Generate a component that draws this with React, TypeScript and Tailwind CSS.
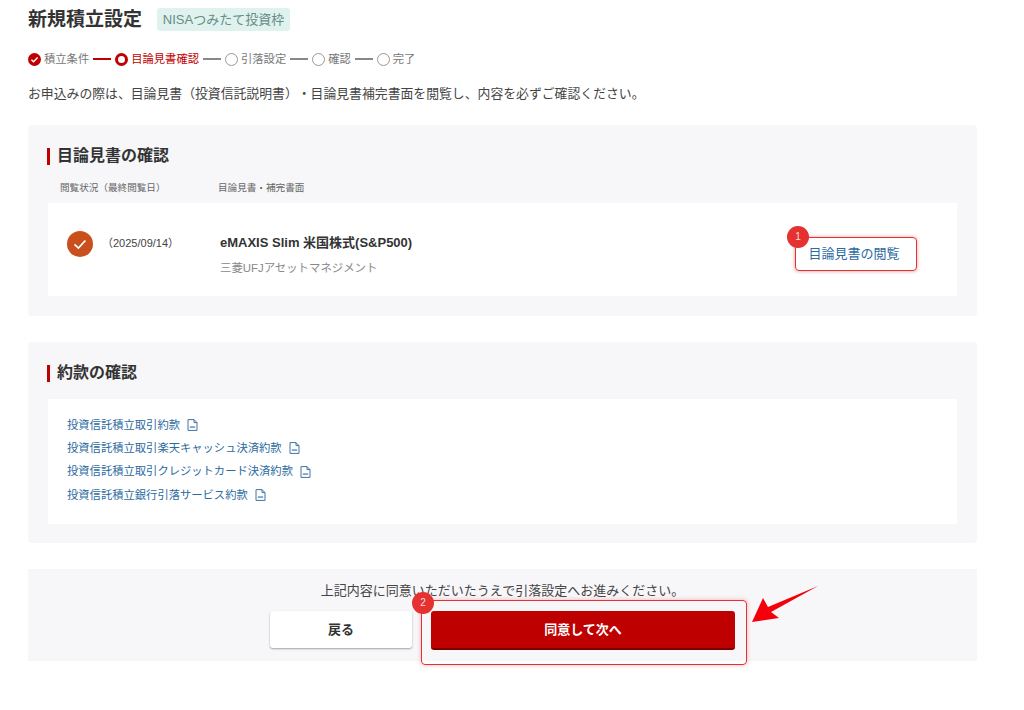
const fontStack = { fontFamily: '"Liberation Sans", "Noto Sans CJK JP", sans-serif' };

const steps = [
  { label: '積立条件', state: 'done' },
  { label: '目論見書確認', state: 'current' },
  { label: '引落設定', state: 'todo' },
  { label: '確認', state: 'todo' },
  { label: '完了', state: 'todo' },
];

const yakkan = [
  '投資信託積立取引約款',
  '投資信託積立取引楽天キャッシュ決済約款',
  '投資信託積立取引クレジットカード決済約款',
  '投資信託積立銀行引落サービス約款',
];

function StepIcon({ state }: { state: string }) {
  if (state === 'done') {
    return (
      <svg width="13" height="13" viewBox="0 0 13 13" className="shrink-0">
        <circle cx="6.5" cy="6.5" r="6.5" fill="#bf0000" />
        <path d="M3.4 6.7l2.2 2.1 4-4.2" fill="none" stroke="#fff" strokeWidth="1.5" />
      </svg>
    );
  }
  if (state === 'current') {
    return <span className="w-[13px] h-[13px] shrink-0 rounded-full border-[3px] border-[#bf0000] bg-white" />;
  }
  return <span className="w-[13px] h-[13px] shrink-0 rounded-full border border-[#999999] bg-white" />;
}

function PdfIcon() {
  return (
    <svg width="11" height="12" viewBox="0 0 11 12" className="shrink-0">
      <path d="M1 .6h6l3 3v7.800H1z" fill="none" stroke="#3f74a3" strokeWidth="1" />
      <path d="M7 .6v3h3" fill="none" stroke="#3f74a3" strokeWidth="1" />
      <path d="M2.800 7.200h5.400v1.800H2.800z" fill="#7fa3c4" />
    </svg>
  );
}

function Heading({ children }: { children: string }) {
  return (
    <h2 className="flex items-center gap-[7px] -ml-px text-[16px] leading-[18px] font-bold text-[#333333]">
      <span className="w-[3px] h-[17px] bg-[#bf0000]" />
      {children}
    </h2>
  );
}

function Badge({ n, className }: { n: number; className: string }) {
  return (
    <span className={`absolute w-[22px] h-[22px] rounded-full bg-[#e5312f] text-[#ffdcdc] text-[10px] leading-[22px] text-center ${className}`}>
      {n}
    </span>
  );
}

export default function App() {
  return (
    <div className="relative w-[1024px] h-[710px] bg-white overflow-hidden text-[#333333] [text-spacing-trim:space-all]" style={fontStack}>
      <div className="w-[949px] ml-[28px] pt-[8px]">
        <div className="flex items-center h-[23px] gap-[15px]">
          <h1 className="text-[19px] leading-[23px] font-bold text-[#333333]">新規積立設定</h1>
          <span className="h-[23px] w-[133px] rounded-[3px] bg-[#dff2ee] text-[13px] leading-[23px] text-center text-[#668c86]">
            NISAつみたて投資枠
          </span>
        </div>

        <ol className="flex items-center mt-[20px] h-[16px] text-[11.3px] text-[#777777]">
          {steps.map((s, i) => (
            <li key={s.label} className="flex items-center">
              {i > 0 && (
                <span className={`w-[18px] h-[2px] mx-[4px] ${i === 1 ? 'bg-[#bf0000]' : 'bg-[#888888]'}`} />
              )}
              <StepIcon state={s.state} />
              <span className={`ml-[3px] ${s.state === 'current' ? 'text-[#bf0000]' : ''}`}>{s.label}</span>
            </li>
          ))}
        </ol>

        <p className="mt-[18px] text-[12.85px] leading-[18px] text-[#444444]">
          お申込みの際は、目論見書（投資信託説明書）・目論見書補完書面を閲覧し、内容を必ずご確認ください。
        </p>

        <section className="mt-[22px] h-[191px] rounded-[4px] bg-[#f7f6f9] px-[20px] pt-[22px]">
          <Heading>目論見書の確認</Heading>
          <div className="flex h-[38px] items-center text-[9.6px] text-[#666666] pl-[12px] pt-[9px]">
            <span className="w-[158px]">閲覧状況（最終閲覧日）</span>
            <span>目論見書・補完書面</span>
          </div>
          <div className="flex items-start h-[93px] bg-white pl-[19px] pr-[41px]">
            <svg width="26" height="26" viewBox="0 0 26 26" className="mt-[28px] shrink-0">
              <circle cx="13" cy="13" r="13" fill="#c9501c" />
              <path d="M7.500 13.300l3.900 3.700 7-7.500" fill="none" stroke="#fff" strokeWidth="1.700" />
            </svg>
            <span className="mt-[32px] ml-[9px] w-[118px] text-[11px] leading-[16px] text-[#444444]">（2025/09/14）</span>
            <div className="mt-[31px] flex-1">
              <p className="text-[13px] leading-[18px] font-bold text-[#333333]">eMAXIS Slim 米国株式(S&amp;P500)</p>
              <p className="mt-[8px] text-[11.4px] leading-[16px] text-[#888888]">三菱UFJアセットマネジメント</p>
            </div>
            <div className="mt-[34px] w-[121px] h-[33px] pr-[3px] text-center text-[13px] leading-[33px] text-[#2b6a9f] bg-white shadow-[0_1px_3px_rgba(0,0,0,0.15)]">
              目論見書の閲覧
            </div>
          </div>
        </section>

        <section className="mt-[26px] h-[201px] rounded-[4px] bg-[#f7f6f9] px-[20px] pt-[22px]">
          <Heading>約款の確認</Heading>
          <div className="mt-[17px] h-[125px] bg-white pl-[19px] pt-[17px]">
            <ul className="flex flex-col gap-[5.4px]">
              {yakkan.map(t => (
                <li key={t} className="flex items-center gap-[7px] h-[18px] text-[11.3px] text-[#2b6a9f]">
                  <span>{t}</span>
                  <PdfIcon />
                </li>
              ))}
            </ul>
          </div>
        </section>

        <section className="mt-[26px] h-[92px] bg-[#f7f6f9] pt-[13px]">
          <p className="text-center text-[13px] leading-[18px] text-[#444444]">
            上記内容に同意いただいたうえで引落設定へお進みください。
          </p>
          <div className="flex mt-[11px] ml-[242px] gap-[19px]">
            <button className="w-[142px] h-[37px] rounded-[3px] bg-white text-[13px] font-bold text-[#333333] shadow-[0_1px_2px_rgba(0,0,0,0.35)]">
              戻る
            </button>
            <button className="w-[304px] h-[39px] rounded-[3px] bg-[#bf0000] border-b-2 border-[#7a0000] text-[13px] font-bold text-white">
              同意して次へ
            </button>
          </div>
        </section>
      </div>

      {/* 注釈 */}
      <div className="absolute left-[795px] top-[237px] w-[122px] h-[34px] rounded-[4px] border-[1.5px] border-[#e5312f] shadow-[0_0_4px_rgba(226,40,46,0.35)]" />
      <Badge n={1} className="left-[787px] top-[226px]" />
      <div className="absolute left-[421px] top-[600px] w-[326px] h-[65px] rounded-[4px] border-[1.5px] border-[#e5312f] shadow-[0_0_4px_rgba(226,40,46,0.35)]" />
      <Badge n={2} className="left-[412px] top-[592px]" />
      <svg width="72" height="40" viewBox="0 0 72 40" className="absolute left-[750px] top-[585px]">
        <path d="M68 1 L21 27 L29 33 L2 37 L13 13 L18 22 Z" fill="#f4000a" />
      </svg>
    </div>
  );
}
